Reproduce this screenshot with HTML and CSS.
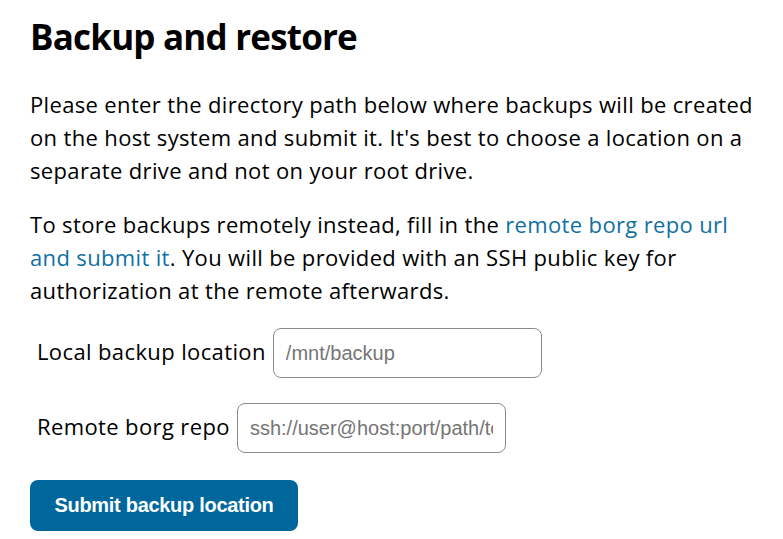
FILE: index.html
```html
<!DOCTYPE html>
<html lang="en">
<head>
     <meta charset="UTF-8">
     <meta name="viewport" content="width=device-width, initial-scale=1.0">
     <title>Backup and restore</title>
     <link rel="stylesheet" href="styles.css">
</head>
<body>
     <div class="page">
          <h2 class="title">Backup and restore</h2>
          <p>Please enter the directory path below where backups will be created on the host system and submit it. It's best to choose a location on a separate drive and not on your root drive.</p>
          <p class="last">To store backups remotely instead, fill in the <a href="#remote">remote borg repo url and submit it</a>. You will be provided with an SSH public key for authorization at the remote afterwards.</p>
          <form class="backup-form" onsubmit="return false">
               <div class="row">
                    <label for="local">Local backup location</label>
                    <input type="text" id="local" placeholder="/mnt/backup">
               </div>
               <div class="row">
                    <label for="remote">Remote borg repo</label>
                    <input type="text" id="remote" placeholder="ssh://user@host:port/path/to/repo">
               </div>
               <button type="submit" class="submit">Submit backup location</button>
          </form>
     </div>
</body>
</html>
```

FILE: styles.css
```css
*{
     padding:0;
     margin:0;
     box-sizing: border-box;
}
html,body{
     width:100%;
     height:100%;
     background: #fff;
}
body{
     font-family: 'Open Sans', 'Noto Sans', sans-serif;
     font-size: 22px;
     letter-spacing: 0.35px;
     line-height: 33px;
     color: #000;
}
.page{
     padding: 14px 30px 0 30px;
     width: 783px;
}
.title{
     font-size: 35px;
     font-weight: 700;
     letter-spacing: -0.8px;
     line-height: 46px;
     margin-bottom: 28px;
}
.page p{
     margin-bottom: 21px;
}
.page p.last{
     margin-bottom: 21px;
}
.page a{
     color: #1170a3;
     text-decoration: none;
}
.row{
     display: flex;
     align-items: center;
     gap: 7px;
     padding-left: 7px;
     margin-bottom: 25px;
}
.row label{
     padding-bottom: 4px;
     letter-spacing: 0.38px;
}
.row input{
     width: 269px;
     height: 50px;
     border: 1px solid #8a8a8a;
     border-radius: 8px;
     padding: 0 12px;
     font-family: 'Liberation Sans', Arial, sans-serif;
     font-size: 20px;
     letter-spacing: 0;
     outline: none;
}
.row input::placeholder{
     color: #757575;
}
.submit{
     width: 268px;
     height: 51px;
     margin-top: 2px;
     border: none;
     border-radius: 8px;
     background: #00679d;
     color: #fff;
     font-family: 'Liberation Sans', Arial, sans-serif;
     font-weight: 700;
     font-size: 20px;
     letter-spacing: -0.3px;
     cursor: pointer;
}
```
